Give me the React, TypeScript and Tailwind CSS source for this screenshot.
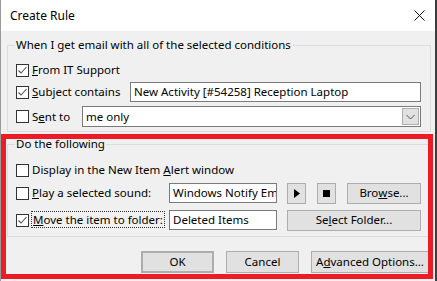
import React from 'react';

const font = { fontFamily: '"Noto Sans", "Liberation Sans", sans-serif' };

function Check({ checked }: { checked?: boolean }) {
  return (
    <span className="flex h-[13px] w-[13px] shrink-0 items-center justify-center border border-[#333333] bg-white">
      {checked && (
        <svg width="11" height="11" viewBox="0 0 11 11">
          <path d="M1.5 5.5 L4 8 L9.5 2" fill="none" stroke="#555555" strokeWidth="1.1" />
        </svg>
      )}
    </span>
  );
}

function Btn({ children, className = '' }: { children: React.ReactNode; className?: string }) {
  return (
    <div
      className={`flex h-[21px] items-center justify-center whitespace-nowrap border border-[#adadad] bg-[#e1e1e1] text-black ${className}`}
    >
      {children}
    </div>
  );
}

function Field({ value, className = '' }: { value: string; className?: string }) {
  return (
    <div
      className={`flex h-[20px] items-center overflow-hidden whitespace-nowrap border border-[#7a7a7a] bg-white pl-[3px] ${className}`}
    >
      {value}
    </div>
  );
}

export default function App() {
  return (
    <div className="relative flex h-[281px] w-[437px] bg-[#3c3c3c]" style={font}>
      <div className="flex h-[281px] w-[435px] flex-col whitespace-nowrap border-l border-[#9a9a9a] bg-[#f0f0f0] text-[11.5px] text-black">
        <div className="flex h-[31px] shrink-0 items-center justify-between bg-white pl-[9px] pr-[10px]">
          <span className="text-[12px]">Create Rule</span>
          <svg width="11" height="11" viewBox="0 0 11 11">
            <path d="M0.5 0.5 L10.5 10.5 M10.5 0.5 L0.5 10.5" stroke="#111111" strokeWidth="1" />
          </svg>
        </div>

        <div className="flex flex-col pt-[6px] pl-[6px]">
          <fieldset className="w-[424px] border border-[#dcdcdc] pb-[4px] pl-[8px] pr-[9px]">
            <legend className="-ml-[1px] px-[1px] leading-[16px]">
              When I get email with all of the selected conditions
            </legend>
            <div className="mt-[7px] flex h-[20px] items-center gap-[3px]">
              <Check checked />
              <span>
                <span className="underline">F</span>rom IT Support
              </span>
            </div>
            <div className="mt-[2px] flex h-[20px] items-center">
              <Check checked />
              <span className="ml-[3px] w-[98px]">
                <span className="underline">S</span>ubject contains
              </span>
              <Field value="New Activity [#54258] Reception Laptop" className="flex-1" />
            </div>
            <div className="mt-[4px] flex h-[21px] items-center">
              <Check />
              <span className="ml-[3px] w-[50px]">
                S<span className="underline">e</span>nt to
              </span>
              <div className="flex h-[21px] flex-1 items-center justify-between border border-[#7a7a7a] bg-white pl-[3px] pr-[1px]">
                <span>me only</span>
                <div className="flex h-[17px] w-[17px] items-center justify-center border border-[#adadad] bg-[#e1e1e1]">
                  <svg width="9" height="6" viewBox="0 0 9 6">
                    <path d="M0.5 1 L4.5 5 L8.5 1" fill="none" stroke="#555555" strokeWidth="1" />
                  </svg>
                </div>
              </div>
            </div>
          </fieldset>

          <fieldset className="mt-[4px] w-[424px] border border-[#dcdcdc] pb-[6px] pl-[8px] pr-[9px]">
            <legend className="-ml-[1px] px-[1px] leading-[16px]">Do the following</legend>
            <div className="mt-[8px] flex h-[20px] items-center gap-[3px]">
              <Check />
              <span>
                Display in the New Item <span className="underline">A</span>lert window
              </span>
            </div>
            <div className="mt-[3px] flex h-[20px] items-center">
              <Check />
              <span className="ml-[3px] w-[137px]">
                <span className="underline">P</span>lay a selected sound:
              </span>
              <Field value="Windows Notify Email" className="w-[108px]" />
              <Btn className="ml-[10px] h-[20px] w-[19px]">
                <svg width="6" height="9" viewBox="0 0 6 9">
                  <path d="M0 0 L6 4.5 L0 9 Z" fill="#000000" />
                </svg>
              </Btn>
              <Btn className="ml-[11px] h-[20px] w-[19px]">
                <span className="h-[7px] w-[7px] bg-black" />
              </Btn>
              <Btn className="ml-[11px] h-[20px] flex-1">
                Bro<span className="underline">w</span>se...
              </Btn>
            </div>
            <div className="mt-[7px] flex h-[20px] items-center">
              <Check checked />
              <span className="ml-[2px] w-[138px]">
                <span className="border border-dotted border-[#333333] px-[1px] leading-[15px]">
                  <span className="underline">M</span>ove the item to folder:
                </span>
              </span>
              <Field value="Deleted Items" className="w-[108px]" />
              <Btn className="ml-[10px] h-[20px] flex-1">
                Se<span className="underline">l</span>ect Folder...
              </Btn>
            </div>
          </fieldset>

          <div className="mt-[14px] flex gap-[12px] pl-[134px]">
            <Btn className="h-[22px] w-[73px] border-2 border-[#0078d7]">OK</Btn>
            <Btn className="h-[22px] w-[73px]">Cancel</Btn>
            <Btn className="h-[22px] w-[118px]">
              A<span className="underline">d</span>vanced Options...
            </Btn>
          </div>
        </div>
      </div>

      <div className="pointer-events-none absolute left-[1px] top-[134px] h-[145px] w-[432px] border-[5px] border-[#ed1c24]" />
    </div>
  );
}
